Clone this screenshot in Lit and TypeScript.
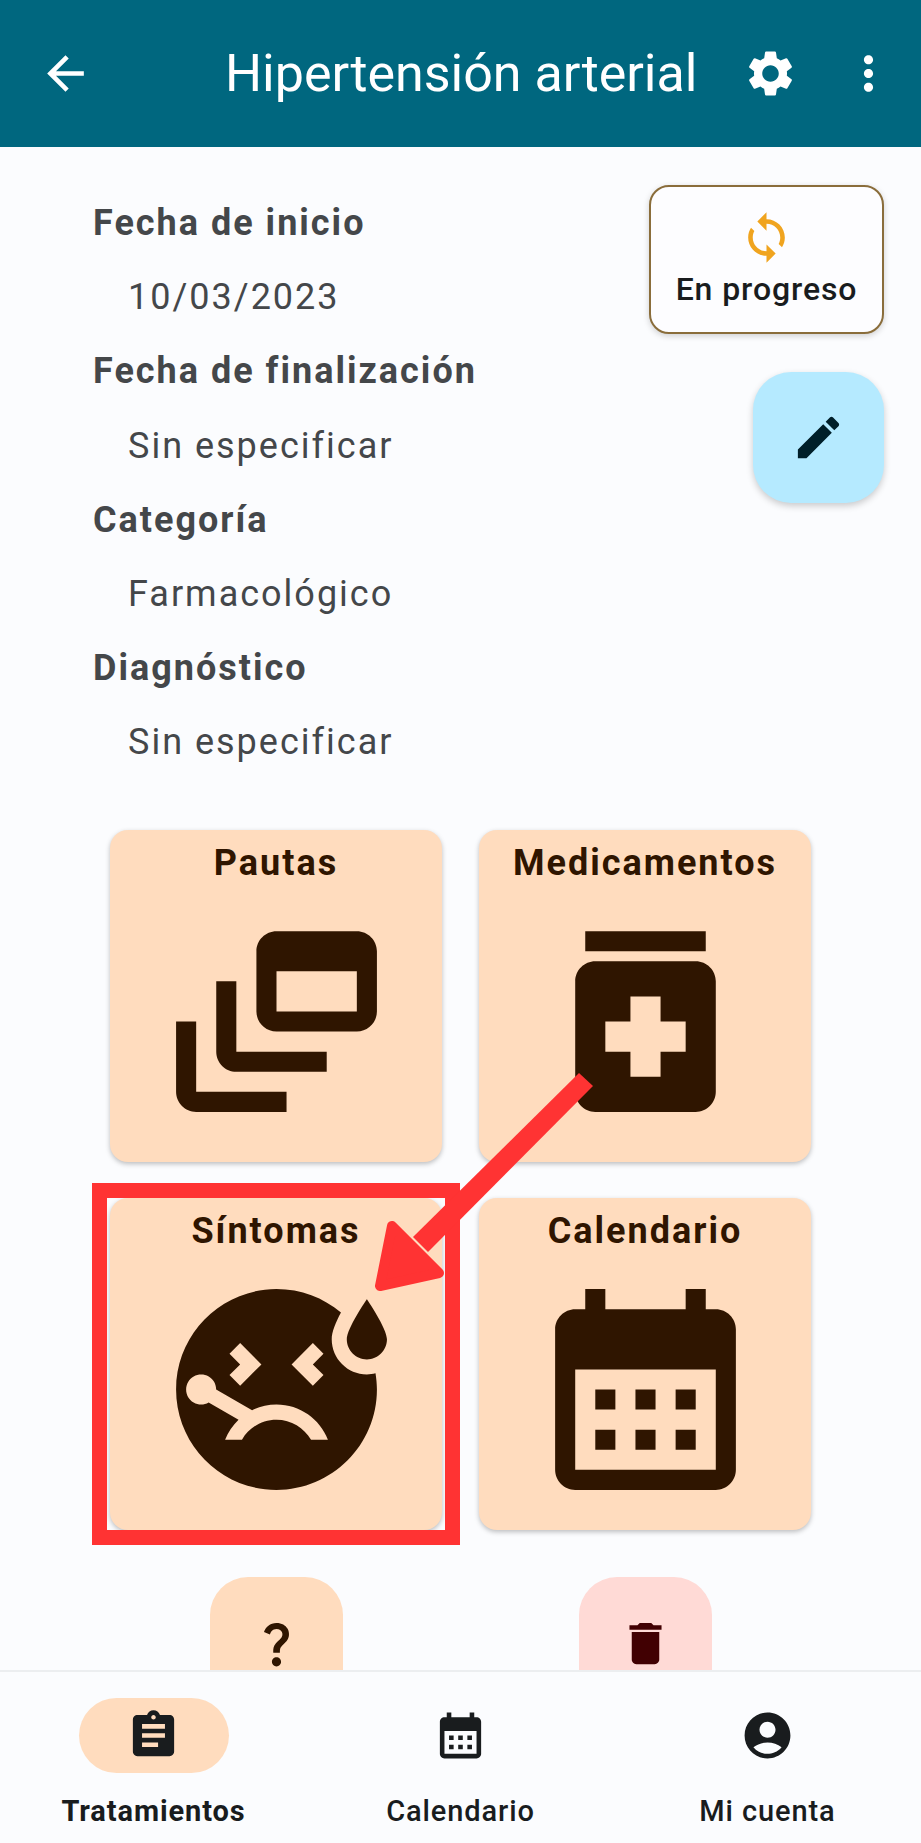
import { css, html, LitElement, svg } from "lit";
import { customElement } from "lit/decorators.js";

const icons = {
  back: svg`<path d="M20 11H7.83l5.59-5.59L12 4l-8 8 8 8 1.41-1.41L7.83 13H20v-2z" />`,
  gear: svg`<path d="M19.14 12.94c.04-.3.06-.61.06-.94 0-.32-.02-.64-.07-.94l2.03-1.58c.18-.14.23-.41.12-.61l-1.92-3.32c-.12-.22-.37-.29-.59-.22l-2.39.96c-.5-.38-1.03-.7-1.62-.94l-.36-2.54c-.04-.24-.24-.41-.48-.41h-3.84c-.24 0-.43.17-.47.41l-.36 2.54c-.59.24-1.13.57-1.62.94l-2.39-.96c-.22-.08-.47 0-.59.22L2.74 8.87c-.12.21-.08.47.12.61l2.03 1.58c-.05.3-.09.63-.09.94s.02.64.07.94l-2.03 1.58c-.18.14-.23.41-.12.61l1.92 3.32c.12.22.37.29.59.22l2.39-.96c.5.38 1.03.7 1.62.94l.36 2.54c.05.24.24.41.48.41h3.84c.24 0 .44-.17.47-.41l.36-2.54c.59-.24 1.13-.56 1.62-.94l2.39.96c.22.08.47 0 .59-.22l1.92-3.32c.12-.22.07-.47-.12-.61l-2.01-1.58zM12 15.6c-1.98 0-3.6-1.62-3.6-3.6s1.62-3.6 3.6-3.6 3.6 1.62 3.6 3.6-1.62 3.6-3.6 3.6z" />`,
  more: svg`<path d="M12 8c1.1 0 2-.9 2-2s-.9-2-2-2-2 .9-2 2 .9 2 2 2zm0 2c-1.1 0-2 .9-2 2s.9 2 2 2 2-.9 2-2-.9-2-2-2zm0 6c-1.1 0-2 .9-2 2s.9 2 2 2 2-.9 2-2-.9-2-2-2z" />`,
  sync: svg`<path d="M12 4V1L8 5l4 4V6c3.31 0 6 2.69 6 6 0 1.01-.25 1.97-.7 2.8l1.46 1.46C19.54 15.03 20 13.57 20 12c0-4.42-3.58-8-8-8zm0 14c-3.31 0-6-2.69-6-6 0-1.01.25-1.97.7-2.8L5.24 7.74C4.46 8.97 4 10.43 4 12c0 4.42 3.58 8 8 8v3l4-4-4-4v3z" />`,
  edit: svg`<path d="M3 17.25V21h3.75L17.81 9.94l-3.75-3.75L3 17.25zM20.71 7.04c.39-.39.39-1.02 0-1.41l-2.34-2.34c-.39-.39-1.02-.39-1.41 0l-1.83 1.83 3.75 3.75 1.83-1.83z" />`,
  feed: svg`<path d="M8 8H6v7c0 1.1.9 2 2 2h9v-2H8V8zM20 3h-8c-1.1 0-2 .9-2 2v6c0 1.1.9 2 2 2h8c1.1 0 2-.9 2-2V5c0-1.1-.9-2-2-2zm0 8h-8V7h8v4zM4 12H2v7c0 1.1.9 2 2 2h9v-2H4v-7z" />`,
  medication: svg`<path d="M6 3h12v2H6zm11 3H7c-1.1 0-2 .9-2 2v11c0 1.1.9 2 2 2h10c1.1 0 2-.9 2-2V8c0-1.1-.9-2-2-2zm-1 9h-2.5v2.5h-3V15H8v-3h2.5V9.5h3V12H16v3z" />`,
  sick: svg`<path d="M21 9c-1.1 0-2-.9-2-2 0-1.1 2-4 2-4s2 2.9 2 4c0 1.1-.9 2-2 2zm-3.5-2c0-.73.41-1.71.92-2.66C16.68 2.88 14.44 2 11.99 2 6.47 2 2 6.48 2 12s4.47 10 9.99 10C17.52 22 22 17.52 22 12c0-.55-.06-1.09-.14-1.62-.28.07-.56.12-.86.12-1.93 0-3.5-1.57-3.5-3.5zm-1.88.38 1.06 1.06-1.06 1.06 1.06 1.06-1.06 1.06L13.5 9.5l2.12-2.12zm-8.3 1.06 1.06-1.06 2.12 2.12-2.12 2.12-1.06-1.06L8.38 9.5 7.32 8.44zM15.44 17c-.69-1.19-1.97-2-3.44-2s-2.75.81-3.44 2H6.88c.3-.76.76-1.43 1.34-1.99L5.24 13.3c-.45.26-1.01.28-1.49 0-.72-.41-.96-1.33-.55-2.05.41-.72 1.33-.96 2.05-.55.48.28.74.78.74 1.29l3.58 2.07c.73-.36 1.55-.56 2.43-.56 2.33 0 4.32 1.45 5.12 3.5h-1.68z" />`,
  calendar: svg`<path d="M19 4h-1V2h-2v2H8V2H6v2H5c-1.1 0-2 .9-2 2v14c0 1.1.9 2 2 2h14c1.1 0 2-.9 2-2V6c0-1.1-.9-2-2-2zm0 16H5V10h14v10zM7 12h2v2H7zm4 0h2v2h-2zm4 0h2v2h-2zM7 16h2v2H7zm4 0h2v2h-2zm4 0h2v2h-2z" />`,
  help: svg`<path d="M11.07 12.85c.77-1.39 2.25-2.21 3.11-3.44.91-1.29.4-3.7-2.18-3.7-1.69 0-2.52 1.28-2.87 2.34L6.54 6.96C7.25 4.83 9.18 3 11.99 3c2.35 0 3.96 1.07 4.78 2.41.7 1.15 1.11 3.3.03 4.9-1.2 1.77-2.35 2.31-2.97 3.45-.25.46-.35.76-.35 2.24h-2.89c-.01-.78-.13-2.05.48-3.15zM14 20c0 1.1-.9 2-2 2s-2-.9-2-2 .9-2 2-2 2 .9 2 2z" />`,
  trash: svg`<path d="M6 19c0 1.1.9 2 2 2h8c1.1 0 2-.9 2-2V7H6v12zM19 4h-3.5l-1-1h-5l-1 1H5v2h14V4z" />`,
  assignment: svg`<path d="M19 3h-4.18C14.4 1.84 13.3 1 12 1c-1.3 0-2.4.84-2.82 2H5c-1.1 0-2 .9-2 2v14c0 1.1.9 2 2 2h14c1.1 0 2-.9 2-2V5c0-1.1-.9-2-2-2zm-7 0c.55 0 1 .45 1 1s-.45 1-1 1-1-.45-1-1 .45-1 1-1zm2 14H7v-2h7v2zm3-4H7v-2h10v2zm0-4H7V7h10v2z" />`,
  account: svg`<path d="M12 2C6.48 2 2 6.48 2 12s4.48 10 10 10 10-4.48 10-10S17.52 2 12 2zm0 4c1.93 0 3.5 1.57 3.5 3.5S13.93 13 12 13s-3.5-1.57-3.5-3.5S10.07 6 12 6zm0 14c-2.03 0-4.43-.82-6.14-2.88C7.55 15.8 9.68 15 12 15s4.45.8 6.14 2.12C16.43 19.18 14.03 20 12 20z" />`,
};

type IconName = keyof typeof icons;

const icon = (name: IconName, cls = "") =>
  html`<svg class="icon ${cls}" viewBox="0 0 24 24" fill="currentColor">${icons[name]}</svg>`;

const details = [
  ["Fecha de inicio", "10/03/2023"],
  ["Fecha de finalización", "Sin especificar"],
  ["Categoría", "Farmacológico"],
  ["Diagnóstico", "Sin especificar"],
];

const cards: [string, IconName][] = [
  ["Pautas", "feed"],
  ["Medicamentos", "medication"],
  ["Síntomas", "sick"],
  ["Calendario", "calendar"],
];

const tabs: [string, IconName, boolean][] = [
  ["Tratamientos", "assignment", true],
  ["Calendario", "calendar", false],
  ["Mi cuenta", "account", false],
];

@customElement("app-root")
export class AppRoot extends LitElement {
  render() {
    return html`<div class="app">
      <header class="bar">
        ${icon("back")}
        <h1 class="title">Hipertensión arterial</h1>
        ${icon("gear")} ${icon("more")}
      </header>

      <main class="content">
        <section class="top">
          <dl class="details">
            ${details.map(
              ([label, value]) => html`<dt>${label}</dt>
                <dd>${value}</dd>`
            )}
          </dl>
          <div class="side">
            <div class="status">
              ${icon("sync", "status-icon")}
              <span>En progreso</span>
            </div>
            <div class="fab edit">${icon("edit")}</div>
          </div>
        </section>

        <section class="grid">
          ${cards.map(
            ([name, ic]) => html`<div class="card">
              <span class="card-title">${name}</span>
              ${icon(ic, "card-icon")}
            </div>`
          )}
        </section>

        <section class="actions">
          <div class="fab help">${icon("help")}</div>
          <div class="fab trash">${icon("trash")}</div>
        </section>
      </main>

      <nav class="nav">
        ${tabs.map(
          ([label, ic, active]) => html`<div class="tab ${active ? "active" : ""}">
            <span class="pill">${icon(ic)}</span>
            <span class="tab-label">${label}</span>
          </div>`
        )}
      </nav>

      <!-- red annotation drawn over the screenshot -->
      <svg class="mark" viewBox="0 0 921 1843">
        <rect x="99.5" y="1190.5" width="353" height="347" fill="none" stroke="#ff3333" stroke-width="15" />
        <polygon points="579,1073 593,1086 428,1252 413,1237" fill="#ff3333" />
        <polygon
          points="392,1226 439,1273 380,1286"
          fill="#ff3333"
          stroke="#ff3333"
          stroke-width="10"
          stroke-linejoin="round"
        />
      </svg>
    </div>`;
  }

  static styles = css`
    :host {
      display: block;
      font-family: Roboto, "Liberation Sans", sans-serif;
    }

    .app {
      position: relative;
      display: flex;
      flex-direction: column;
      height: 1843px;
      overflow: hidden;
      background: #fbfcfe;
    }

    .icon {
      display: block;
      width: 55px;
      height: 55px;
      flex: none;
    }

    .bar {
      display: flex;
      align-items: center;
      flex: none;
      gap: 43px;
      height: 147px;
      padding: 0 25px 0 38px;
      box-sizing: border-box;
      background: #00677f;
      color: #fff;
    }

    .title {
      flex: 1;
      margin: 0 0 0 89px;
      font-size: 52px;
      font-weight: 400;
      white-space: nowrap;
    }

    .content {
      flex: 1;
      min-height: 0;
      overflow: hidden;
    }

    .top {
      display: flex;
      justify-content: space-between;
      padding: 39px 37px 0 93px;
    }

    .details {
      margin: 0;
      font-size: 36px;
      line-height: 74.2px;
      letter-spacing: 2px;
      color: #44474a;
    }

    .details dt {
      font-weight: 700;
    }

    .details dd {
      margin: 0 0 0 35px;
    }

    .side {
      display: flex;
      flex-direction: column;
      align-items: flex-end;
      margin-top: -1px;
      gap: 38px;
    }

    .status {
      display: flex;
      flex-direction: column;
      align-items: center;
      width: 235px;
      height: 149px;
      box-sizing: border-box;
      padding-top: 23px;
      border: 2px solid #8a6d3b;
      border-radius: 20px;
      background: #fdfdff;
      box-shadow: 0 2px 6px rgba(0, 0, 0, 0.18);
      font-size: 32px;
      font-weight: 500;
      letter-spacing: 0.9px;
      color: #191c1e;
    }

    .status-icon {
      color: #f0a41f;
      margin-bottom: 5px;
    }

    .fab {
      display: flex;
      align-items: center;
      justify-content: center;
      width: 133px;
      height: 132px;
      border-radius: 38px;
    }

    .edit {
      width: 131px;
      height: 131px;
      background: #b5eaff;
      color: #001f29;
      box-shadow: 0 3px 7px rgba(0, 0, 0, 0.2);
    }

    .grid {
      display: grid;
      grid-template-columns: 332px 332px;
      gap: 36px 37px;
      padding: 50.4px 0 0 110px;
    }

    .card {
      display: flex;
      flex-direction: column;
      align-items: center;
      height: 332px;
      border-radius: 18px;
      background: #ffdcbe;
      color: #2f1500;
      box-shadow: 0 2px 5px rgba(0, 0, 0, 0.25);
    }

    .card-title {
      height: 71px;
      line-height: 66px;
      font-size: 36px;
      font-weight: 700;
      letter-spacing: 2px;
    }

    .card-icon {
      width: 241px;
      height: 241px;
    }

    .actions {
      display: flex;
      gap: 236px;
      padding: 47px 0 0 210px;
    }

    .help {
      background: #ffdcbe;
      color: #2f1500;
    }

    .trash {
      background: #ffdad6;
      color: #410002;
    }

    .nav {
      display: grid;
      grid-template-columns: repeat(3, 307px);
      flex: none;
      height: 173px;
      box-sizing: border-box;
      padding-top: 26px;
      border-top: 2px solid #eceef0;
      background: #fbfcfe;
      color: #191c1e;
    }

    .tab {
      display: flex;
      flex-direction: column;
      align-items: center;
    }

    .pill {
      display: flex;
      align-items: center;
      justify-content: center;
      width: 150px;
      height: 75px;
      border-radius: 38px;
    }

    .active .pill {
      background: #ffdcbe;
    }

    .tab-label {
      margin-top: 20px;
      font-size: 29px;
      line-height: 36px;
      font-weight: 500;
      letter-spacing: 0.9px;
    }

    .active .tab-label {
      font-weight: 700;
    }

    .mark {
      position: absolute;
      inset: 0;
      width: 921px;
      height: 1843px;
      pointer-events: none;
    }
  `;
}
